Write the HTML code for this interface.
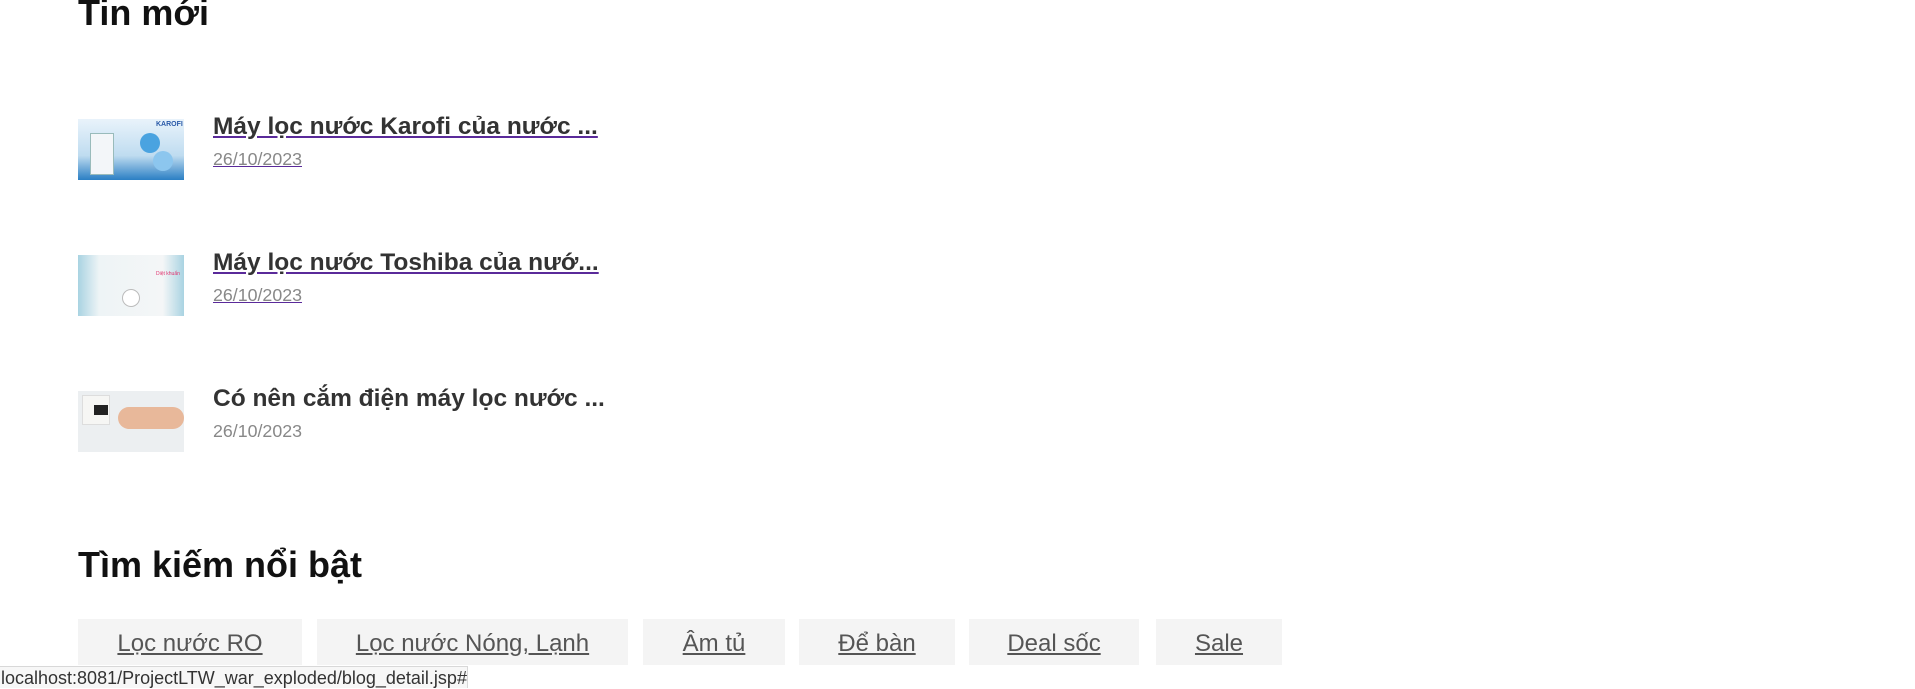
<!DOCTYPE html>
<html><head><meta charset="utf-8"><style>
body{margin:0;width:1915px;height:687px;overflow:hidden;background:#fff;font-family:"Liberation Sans",Arial,sans-serif;position:relative}
.a{position:absolute;white-space:nowrap}
h2{margin:0;font-size:36px;font-weight:bold;color:#111;position:absolute;left:78px;line-height:1}
.th{position:absolute;left:78px;width:106px;height:61px;overflow:hidden}
.t{left:213px;font-size:24.5px;font-weight:bold;color:#333;text-decoration:underline;text-decoration-color:#5a2a9a;line-height:1}
.d{left:213px;font-size:17.8px;color:#888;text-decoration:underline;text-decoration-color:#5a2a9a;line-height:1}
.tag{position:absolute;top:619px;height:46px;background:#f4f4f4;font-size:24px;color:#555;text-align:center;line-height:50px}
.tag span{text-decoration:underline}
</style></head><body>
<h2 style="top:-5px">Tin mới</h2>

<div class="th" style="top:119px;background:linear-gradient(180deg,#e9f3fb,#bfdcf0 60%,#2b7fc4)">
<div style="position:absolute;left:12px;top:14px;width:22px;height:40px;background:#f3f6f9;border:1px solid #9bb"></div>
<div style="position:absolute;left:62px;top:14px;width:20px;height:20px;border-radius:50%;background:#4aa3e0"></div>
<div style="position:absolute;left:75px;top:32px;width:20px;height:20px;border-radius:50%;background:#8cc6ee"></div>
<div style="position:absolute;left:78px;top:2px;font-size:7px;color:#2a5aa8;font-weight:bold">KAROFI</div>
</div>
<div class="a t" style="top:115px">Máy lọc nước Karofi của nước ...</div>
<div class="a d" style="top:151px">26/10/2023</div>

<div class="th" style="top:255px;background:linear-gradient(90deg,#a9d3e2,#eef4f6 20%,#f4f6f7 80%,#a9d3e2)">
<div style="position:absolute;left:44px;top:34px;width:16px;height:16px;border-radius:50%;border:1px solid #bbb;background:#fff"></div>
<div style="position:absolute;left:78px;top:16px;font-size:5px;color:#e0336e">Diệt khuẩn</div>
</div>
<div class="a t" style="top:251px">Máy lọc nước Toshiba của nướ...</div>
<div class="a d" style="top:287px">26/10/2023</div>

<div class="th" style="top:391px;background:#eceff1">
<div style="position:absolute;left:4px;top:4px;width:26px;height:28px;background:#f6f6f4;border:1px solid #ddd"></div>
<div style="position:absolute;left:40px;top:16px;width:66px;height:22px;border-radius:12px;background:#e8b89a"></div>
<div style="position:absolute;left:16px;top:14px;width:14px;height:10px;background:#222"></div>
</div>
<div class="a t" style="top:387px;text-decoration:none">Có nên cắm điện máy lọc nước ...</div>
<div class="a d" style="top:423px;text-decoration:none">26/10/2023</div>

<h2 style="top:547px">Tìm kiếm nổi bật</h2>

<div class="tag" style="left:78px;width:224px"><span>Lọc nước RO</span></div>
<div class="tag" style="left:317px;width:311px"><span>Lọc nước Nóng, Lạnh</span></div>
<div class="tag" style="left:643px;width:142px"><span>Âm tủ</span></div>
<div class="tag" style="left:799px;width:156px"><span>Để bàn</span></div>
<div class="tag" style="left:969px;width:170px"><span>Deal sốc</span></div>
<div class="tag" style="left:1156px;width:126px"><span>Sale</span></div>

<div class="a" style="left:0;top:666px;width:466px;height:21px;background:#f7f7f7;border:1px solid #d8d8d8;border-left:none;border-bottom:none;font-size:18px;color:#333;line-height:22px;padding-left:1px">localhost:8081/ProjectLTW_war_exploded/blog_detail.jsp#</div>
</body></html>
